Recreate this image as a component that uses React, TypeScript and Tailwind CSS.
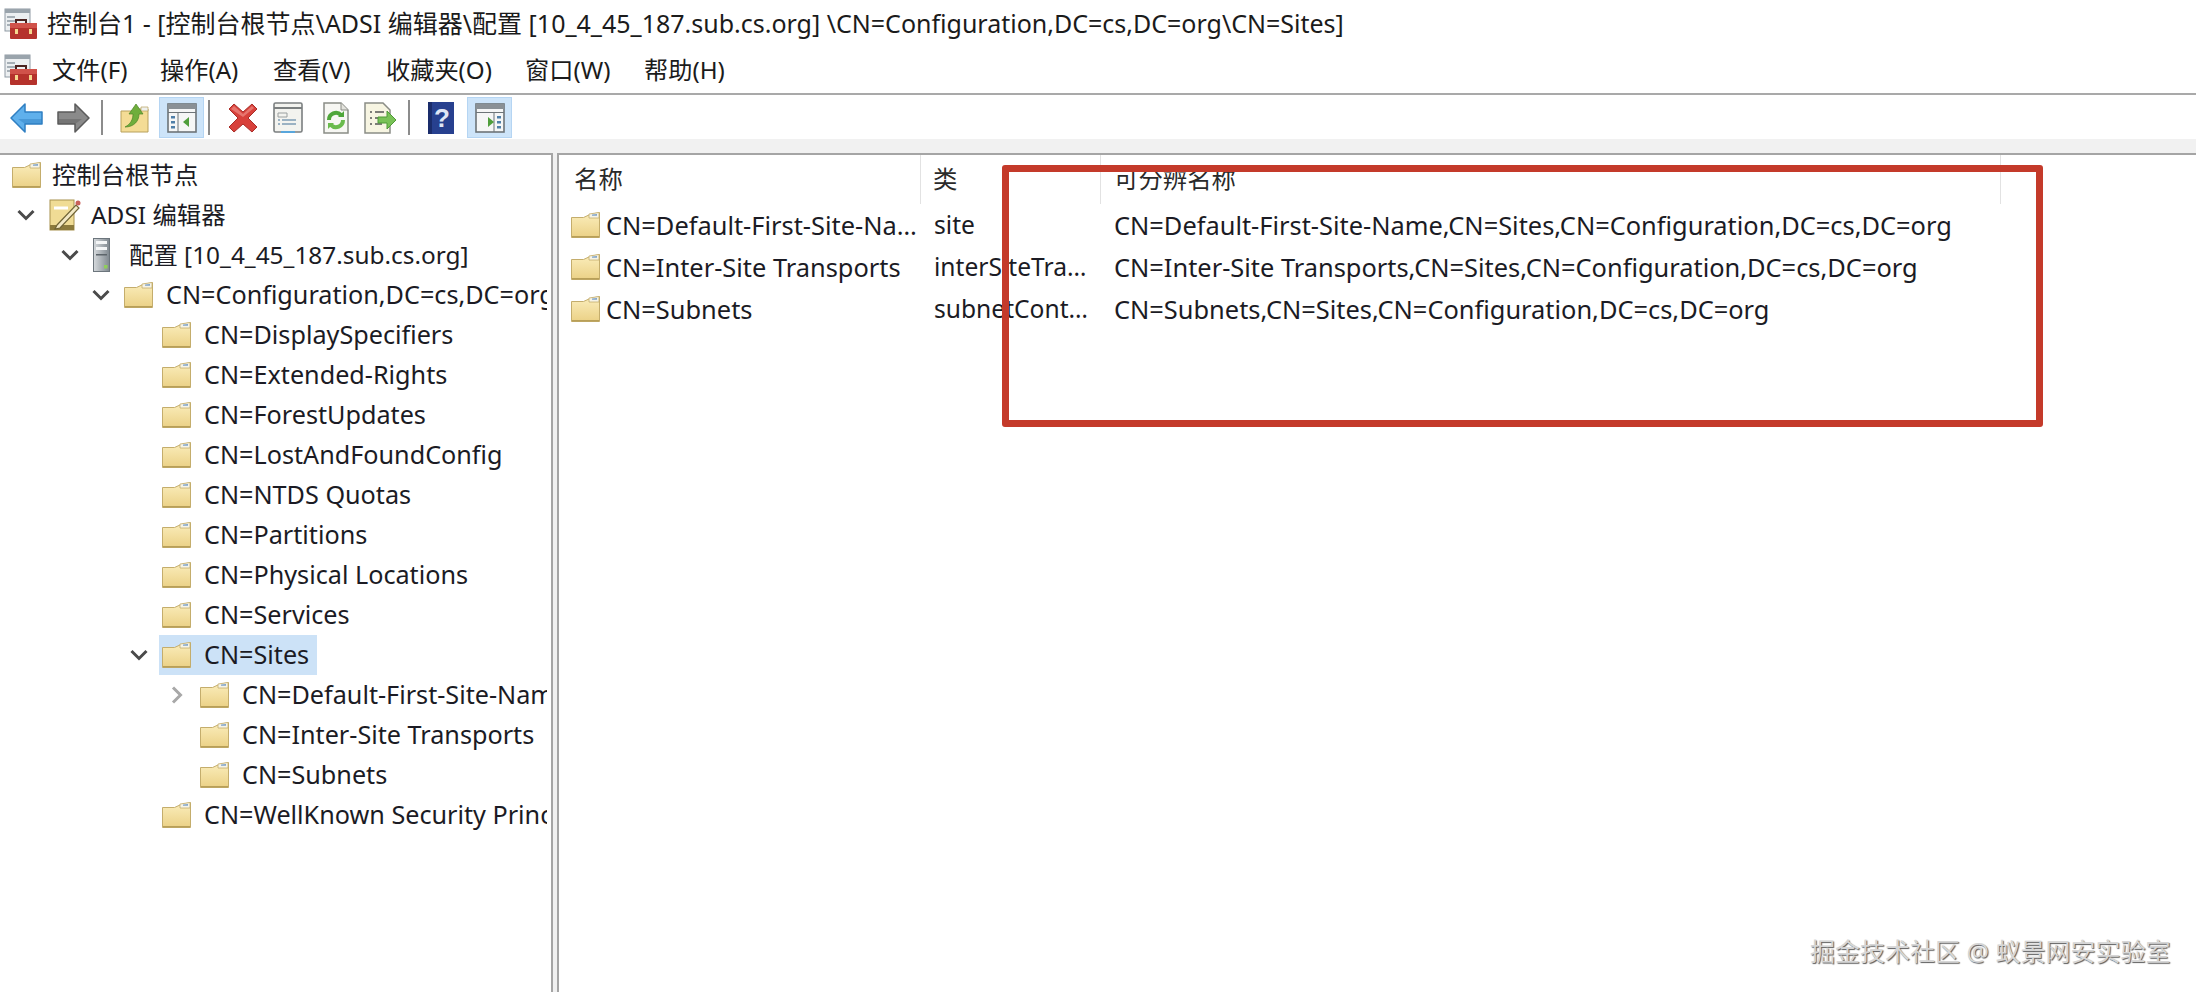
const font = "font-['Noto_Sans','Noto_Sans_CJK_SC',sans-serif]"

function Folder({ className = "" }: { className?: string }) {
  return (
    <svg viewBox="0 0 29 26" className={`h-[26px] w-[29px] shrink-0 ${className}`}>
      <defs>
        <linearGradient id="fold" x1="0" y1="0" x2="0" y2="1">
          <stop offset="0" stopColor="#fbeebd" />
          <stop offset="1" stopColor="#ebd186" />
        </linearGradient>
      </defs>
      <path d="M.5 5.500h12L19 2.500l9.500-2v25H.5z" fill="url(#fold)" stroke="#c4ad6c" />
      <path d="M18 2l10-1.500V6H18z" fill="#f6f3e6" stroke="#c4ad6c" strokeWidth=".8" />
      <path d="M21 2.500l5-.6v1.800h-5z" fill="#7fa3c9" />
      <path d="M1 24h27v1.500H1z" fill="#b89f58" />
    </svg>
  )
}

function Toolbox({ className = "" }: { className?: string }) {
  return (
    <svg viewBox="0 0 34 32" className={`h-[32px] w-[34px] shrink-0 ${className}`}>
      <rect x="1" y="1" width="25" height="22" fill="#eceff1" stroke="#8f9aa3" />
      <rect x="1" y="1" width="25" height="4" fill="#9aa4ac" />
      <path d="M3 9h8M3 13h8M3 17h8" stroke="#8f9aa3" strokeWidth="1.5" />
      <path d="M12 15v-3h10v3" fill="none" stroke="#4a2320" strokeWidth="2" />
      <rect x="6" y="15" width="27" height="16" rx="1" fill="#b5322c" />
      <rect x="6" y="15" width="27" height="5" fill="#d0524a" />
      <rect x="11" y="21" width="3" height="5" fill="#f5d78e" />
      <rect x="25" y="21" width="3" height="5" fill="#f5d78e" />
    </svg>
  )
}

function Chevron({ open = true, muted = false }: { open?: boolean; muted?: boolean }) {
  return (
    <svg viewBox="0 0 18 18" className="h-[18px] w-[18px] shrink-0" fill="none" stroke={muted ? "#a8a8a8" : "#4a4a4a"} strokeWidth="3">
      {open ? <path d="M1.500 5l7.500 7.500L16.500 5" /> : <path d="M5 1.500L12.500 9 5 16.500" />}
    </svg>
  )
}

function NoteIcon() {
  return (
    <svg viewBox="0 0 32 32" className="h-[32px] w-[32px] shrink-0">
      <rect x="1" y="1" width="24" height="30" fill="#f0dc95" stroke="#a8924f" />
      <rect x="1" y="26" width="24" height="5" fill="#8c7a3c" />
      <path d="M5 9h14" stroke="#fff" strokeWidth="3" />
      <path d="M8 26L27 6l3 3-19 20-5 1z" fill="#f3e9c5" stroke="#6f6335" strokeWidth="1.2" />
      <circle cx="29" cy="4" r="2.500" fill="#c9605a" />
    </svg>
  )
}

function ServerIcon() {
  return (
    <svg viewBox="0 0 17 34" className="h-[34px] w-[17px] shrink-0">
      <defs>
        <linearGradient id="srv" x1="0" y1="0" x2="1" y2="0">
          <stop offset="0" stopColor="#d6dadd" />
          <stop offset="1" stopColor="#7f888f" />
        </linearGradient>
      </defs>
      <rect x=".5" y=".5" width="16" height="33" fill="url(#srv)" stroke="#6c757c" />
      <rect x="3" y="3" width="11" height="3" fill="#f4f6f7" />
      <rect x="3" y="9" width="11" height="3" fill="#f4f6f7" />
      <rect x="3" y="16" width="11" height="1.500" fill="#5d656b" />
      <rect x="11" y="27" width="3.500" height="3.500" fill="#8fce5a" />
    </svg>
  )
}

function ArrowBtn({ dir, color, dark }: { dir: "l" | "r"; color: string; dark: string }) {
  return (
    <svg viewBox="0 0 33 30" className="h-[30px] w-[33px]">
      <path
        d={dir === "l" ? "M1 15L15 1v8h17v12H15v8z" : "M32 15L18 1v8H1v12h17v8z"}
        fill={color}
        stroke={dark}
        strokeWidth="1.5"
        strokeLinejoin="round"
      />
      <path d={dir === "l" ? "M15 21h17v-5H8z" : "M18 21H1v-5h24z"} fill={dark} opacity=".45" />
    </svg>
  )
}

function UpFolder() {
  return (
    <svg viewBox="0 0 29 30" className="h-[30px] w-[29px]">
      <path d="M1 8h12l4-2h11v23H1z" fill="#f4dc95" stroke="#b8a15c" />
      <path d="M21 4h7v4h-7z" fill="#eef0ee" stroke="#b8a15c" strokeWidth=".7" />
      <path d="M5 24c6-3 8-8 8-13H9l7-10 7 10h-4c0 7-5 13-14 13z" fill="#6fae3c" stroke="#4b8426" strokeWidth=".7" />
    </svg>
  )
}

function Pane({ side }: { side: "l" | "r" }) {
  const items = [0, 1, 2]
  return (
    <svg viewBox="0 0 30 30" className="h-[30px] w-[30px]">
      <rect x="1" y="1" width="28" height="28" fill="#f5f6f6" stroke="#6d7478" strokeWidth="1.6" />
      <rect x="1" y="1" width="28" height="5" fill="#8a9095" />
      <path d="M1 9.500h28" stroke="#6d7478" />
      <path d={side === "l" ? "M11 10v19" : "M19 10v19"} stroke="#6d7478" />
      {items.map((i) => (
        <rect key={i} x={side === "l" ? 4 : 22} y={13 + i * 5} width="4" height="2.500" fill="#4f7fa8" />
      ))}
      <path d={side === "l" ? "M22 14v10l-6-5z" : "M13 14v10l6-5z"} fill="#4f9e3c" />
    </svg>
  )
}

function RedX() {
  return (
    <svg viewBox="0 0 32 30" className="h-[30px] w-[32px]">
      <path d="M2 6l5-5 9 8 9-8 5 5-9 9 9 9-5 5-9-8-9 8-5-5 9-9z" fill="#d8413b" stroke="#a92d28" strokeWidth="1" strokeLinejoin="round" />
      <path d="M4 6l3-3 9 8 9-8 2 2-11 9z" fill="#ef8b85" opacity=".7" />
    </svg>
  )
}

function Props() {
  return (
    <svg viewBox="0 0 30 32" className="h-[32px] w-[30px]">
      <rect x="1" y="1" width="28" height="29" rx="1.500" fill="#f3f3ef" stroke="#7b7f80" strokeWidth="1.6" />
      <path d="M1 6h28" stroke="#7b7f80" strokeWidth="2" />
      <path d="M5 11h9v4H5z" fill="none" stroke="#9a9f9f" />
      <path d="M5 18h2M9 18h14M5 22h2M9 22h14" stroke="#7f9db5" strokeWidth="1.5" />
      <path d="M8 29h14v2H8z" fill="#58a6dc" />
    </svg>
  )
}

function Doc({ kind }: { kind: "refresh" | "export" }) {
  if (kind === "refresh") {
    return (
      <svg viewBox="0 0 26 32" className="h-[32px] w-[26px]">
        <path d="M1 1h17l7 7v23H1z" fill="#f7f7f3" stroke="#8b8d86" strokeWidth="1.5" />
        <path d="M18 1v7h7" fill="#e3e3dd" stroke="#8b8d86" />
        <path d="M6 18a7 7 0 0 1 12-5" fill="none" stroke="#4fa63a" strokeWidth="4" />
        <path d="M20 18a7 7 0 0 1-12 5" fill="none" stroke="#6abb4d" strokeWidth="4" />
        <path d="M15 15h6v-6z" fill="#4fa63a" />
        <path d="M11 21H5v6z" fill="#6abb4d" />
      </svg>
    )
  }
  return (
    <svg viewBox="0 0 33 32" className="h-[32px] w-[33px]">
      <path d="M1 1h18l7 7v23H1z" fill="#f7f5e2" stroke="#8b8d86" strokeWidth="1.5" />
      <path d="M6 10h2M11 10h9M6 16h2M11 16h7M6 22h2M11 22h7" stroke="#555" strokeWidth="1.6" />
      <path d="M14 15h9v-6l9 9-9 9v-6h-9z" fill="#79c257" stroke="#4f9a36" />
    </svg>
  )
}

function Help() {
  return (
    <svg viewBox="0 0 26 32" className="h-[32px] w-[26px]">
      <rect width="26" height="32" fill="#27408f" />
      <rect width="4" height="32" fill="#1a2c6b" />
      <text x="14" y="25" textAnchor="middle" fontSize="26" fontWeight="700" fill="#dfe6f5" fontFamily="Liberation Sans, sans-serif">?</text>
    </svg>
  )
}

function Sep({ className = "" }: { className?: string }) {
  return <div className={`h-[35px] w-[2px] shrink-0 bg-[#8c8c8c] ${className}`} />
}

function Toolbar() {
  return (
    <div className="flex h-[46px] items-center border-t-2 border-[#a9a9a9] bg-white pl-[10px] pt-[1px]">
      <ArrowBtn dir="l" color="#5fb0ec" dark="#2f7fc2" />
      <div className="ml-[14px]">
        <ArrowBtn dir="r" color="#8a8a8a" dark="#5b5b5b" />
      </div>
      <Sep className="ml-[11px]" />
      <div className="ml-[17px]">
        <UpFolder />
      </div>
      <div className="ml-[10px] flex h-[41px] w-[45px] items-center justify-center border border-[#b5d5f3] bg-[#cde4f9]">
        <Pane side="l" />
      </div>
      <Sep className="ml-[4px]" />
      <div className="ml-[17px]">
        <RedX />
      </div>
      <div className="ml-[14px]">
        <Props />
      </div>
      <div className="ml-[20px]">
        <Doc kind="refresh" />
      </div>
      <div className="ml-[15px]">
        <Doc kind="export" />
      </div>
      <Sep className="ml-[11px]" />
      <div className="ml-[18px]">
        <Help />
      </div>
      <div className="ml-[13px] flex h-[41px] w-[45px] items-center justify-center border border-[#b5d5f3] bg-[#cde4f9]">
        <Pane side="r" />
      </div>
    </div>
  )
}

type TreeRow = { label: string; indent: number; selected?: boolean; chevron?: "open" | "closed"; icon?: "folder" | "note" | "server" }

const rows: TreeRow[] = [
  { label: "控制台根节点", indent: 12 },
  { label: "ADSI 编辑器", indent: 49, icon: "note", chevron: "open" },
  { label: "配置 [10_4_45_187.sub.cs.org]", indent: 93, icon: "server", chevron: "open" },
  { label: "CN=Configuration,DC=cs,DC=org", indent: 124, chevron: "open" },
  { label: "CN=DisplaySpecifiers", indent: 162 },
  { label: "CN=Extended-Rights", indent: 162 },
  { label: "CN=ForestUpdates", indent: 162 },
  { label: "CN=LostAndFoundConfig", indent: 162 },
  { label: "CN=NTDS Quotas", indent: 162 },
  { label: "CN=Partitions", indent: 162 },
  { label: "CN=Physical Locations", indent: 162 },
  { label: "CN=Services", indent: 162 },
  { label: "CN=Sites", indent: 162, selected: true, chevron: "open" },
  { label: "CN=Default-First-Site-Name", indent: 200, chevron: "closed" },
  { label: "CN=Inter-Site Transports", indent: 200 },
  { label: "CN=Subnets", indent: 200 },
  { label: "CN=WellKnown Security Principals", indent: 162 },
]

function Row({ row }: { row: TreeRow }) {
  const gap = row.icon === "server" ? "ml-[19px]" : row.icon === "note" ? "ml-[10px]" : row.indent === 12 ? "ml-[11px]" : "ml-[13px]"
  const size = /[^\x00-\x7f]/.test(row.label) ? "text-[24.4px]" : "text-[25.2px]"
  return (
    <div className="flex h-[40px] items-center" style={{ paddingLeft: row.indent }}>
      {row.chevron && (
        <div className="relative h-0 w-0">
          <div className="absolute left-[-32px] top-[-9px]">
            <Chevron open={row.chevron === "open"} muted={row.chevron === "closed"} />
          </div>
        </div>
      )}
      <div className={`flex h-[40px] items-center ${row.selected ? "-ml-[3px] bg-[#cce2f7] pl-[3px] pr-[8px]" : ""}`}>
        {row.icon === "note" ? <NoteIcon /> : row.icon === "server" ? <ServerIcon /> : <Folder />}
        <span className={`${gap} whitespace-nowrap ${size} text-[#1b1b24]`}>{row.label}</span>
      </div>
    </div>
  )
}

const list = [
  { name: "CN=Default-First-Site-Na…", cls: "site", dn: "CN=Default-First-Site-Name,CN=Sites,CN=Configuration,DC=cs,DC=org" },
  { name: "CN=Inter-Site Transports", cls: "interSiteTra…", dn: "CN=Inter-Site Transports,CN=Sites,CN=Configuration,DC=cs,DC=org" },
  { name: "CN=Subnets", cls: "subnetCont…", dn: "CN=Subnets,CN=Sites,CN=Configuration,DC=cs,DC=org" },
]

function ListPane() {
  return (
    <div className="relative min-w-0 flex-1 border-l-2 border-t-2 border-[#a5a5a5] bg-white">
      <div className="flex h-[49px] text-[24.4px] text-[#2a2a2a]">
        <div className="flex w-[362px] items-center border-r border-[#e2e2e2] pl-[15px]">名称</div>
        <div className="flex w-[180px] items-center border-r border-[#e2e2e2] pl-[12px]">类</div>
        <div className="flex w-[900px] items-center border-r border-[#e2e2e2] pl-[13px]">可分辨名称</div>
      </div>
      <div>
        {list.map((r) => (
          <div key={r.dn} className="flex h-[42px] items-center whitespace-nowrap text-[25.4px] text-[#1b1b24]">
            <div className="flex w-[362px] items-center pl-[12px]">
              <Folder />
              <span className="ml-[6px]">{r.name}</span>
            </div>
            <div className="w-[180px] pl-[13px] text-[24.6px]">{r.cls}</div>
            <div className="pl-[13px]">{r.dn}</div>
          </div>
        ))}
      </div>
    </div>
  )
}

export default function App() {
  return (
    <div className={`relative flex h-[992px] w-[2196px] flex-col overflow-hidden bg-white ${font}`}>
      <div className="flex h-[47px] items-center pl-[4px]">
        <Toolbox />
        <span className="ml-[9px] whitespace-nowrap text-[25px] text-[#1b1b1b]">
          控制台1 - [控制台根节点\ADSI 编辑器\配置 [10_4_45_187.sub.cs.org] \CN=Configuration,DC=cs,DC=org\CN=Sites]
        </span>
      </div>
      <div className="relative flex h-[46px] items-center whitespace-nowrap pl-[4px] text-[24.2px] text-[#1b1b1b]">
        <Toolbox />
        <span className="ml-[14px] w-[108px]">文件(F)</span>
        <span className="w-[113px]">操作(A)</span>
        <span className="w-[113px]">查看(V)</span>
        <span className="w-[139px]">收藏夹(O)</span>
        <span className="w-[119px]">窗口(W)</span>
        <span>帮助(H)</span>
      </div>
      <Toolbar />
      <div className="h-[14px] bg-[#f1f1f1]" />
      <div className="flex min-h-0 flex-1 bg-[#f1f1f1]">
        <div className="w-[553px] shrink-0 border-r-2 border-t-2 border-[#a5a5a5] bg-white">
          <div className="w-[547px] overflow-hidden">
            {rows.map((r) => (
              <Row key={r.label} row={r} />
            ))}
          </div>
        </div>
        <div className="w-[4px] shrink-0" />
        <ListPane />
      </div>
      <div className="pointer-events-none absolute left-[1002px] top-[165px] h-[262px] w-[1041px] rounded-[3px] border-[7px] border-[#c43a2a]" />
      <div className="absolute left-[1810px] top-[933px] whitespace-nowrap text-[25px] text-[#d6d6d6] [text-shadow:1px_1px_1px_#5c5c5c]">
        掘金技术社区 @ 蚁景网安实验室
      </div>
    </div>
  )
}
